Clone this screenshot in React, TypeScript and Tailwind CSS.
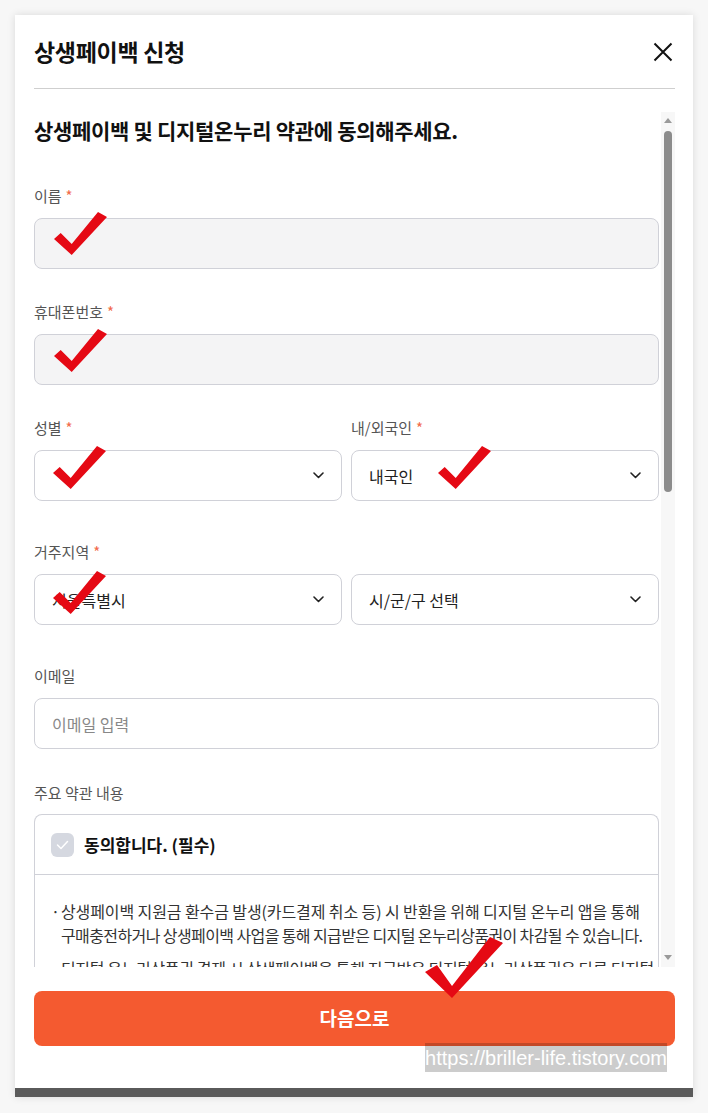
import React from "react";

function Check({ className }: { className: string }) {
  return (
    <svg className={className} viewBox="0 0 54 44" preserveAspectRatio="none">
      <polygon points="0,27 6.7,21 17.7,32 44,0 53,5 17.7,43" fill="#e50914" />
    </svg>
  );
}

function Chevron() {
  return (
    <svg width="11" height="7" viewBox="0 0 11 7" fill="none">
      <polyline points="1,1 5.5,5.5 10,1" stroke="#222" strokeWidth="1.6" strokeLinecap="round" strokeLinejoin="round" />
    </svg>
  );
}

function Label({ text, required }: { text: string; required?: boolean }) {
  return (
    <div className="text-[15px] leading-[22px] text-[#555]">
      {text}
      {required && <span className="ml-[4px] text-[#f26a4b]">*</span>}
    </div>
  );
}

function Select({ value }: { value?: string }) {
  return (
    <div className="h-[51px] rounded-[8px] border border-[#d0d1d8] bg-white flex items-center justify-between pl-[17px] pr-[17px]">
      <span className="text-[16px] text-[#222]">{value}</span>
      <Chevron />
    </div>
  );
}

export default function App() {
  return (
    <div className="relative min-h-[1113px] bg-[#f7f7f7] pt-[15px] px-[15px] font-['Noto_Sans_CJK_KR','Noto_Sans',sans-serif]">
      <div className="h-[1082px] bg-white shadow-[0_0_8px_rgba(0,0,0,0.12)] flex flex-col">
        {/* Header */}
        <div className="pl-[19px] pr-[18px]">
          <div className="h-[74px] flex items-center justify-between border-b border-[#cfcfcf]">
            <h1 className="text-[23px] font-bold text-[#111] tracking-[-0.3px]">상생페이백 신청</h1>
            <svg className="mr-[2px]" width="20" height="20" viewBox="0 0 20 20">
              <path d="M1.5 1.5L18.5 18.5M18.5 1.5L1.5 18.5" stroke="#111" strokeWidth="2" />
            </svg>
          </div>
        </div>

        {/* Scroll body */}
        <div className="mt-[23px] h-[855px] flex gap-[2px] pl-[19px] pr-[18px]">
          <div className="flex-1 overflow-hidden">
            <div className="pt-[4px] text-[21px] leading-[28px] font-bold text-[#111] tracking-[-0.3px]">
              상생페이백 및 디지털온누리 약관에 동의해주세요.
            </div>

            <div className="mt-[41px]">
              <Label text="이름" required />
              <div className="mt-[11px] h-[51px] rounded-[8px] border border-[#d0d1d8] bg-[#f4f4f5]" />
            </div>

            <div className="mt-[32px]">
              <Label text="휴대폰번호" required />
              <div className="mt-[11px] h-[51px] rounded-[8px] border border-[#d0d1d8] bg-[#f4f4f5]" />
            </div>

            <div className="mt-[32px] grid grid-cols-2 gap-[9px]">
              <div>
                <Label text="성별" required />
                <div className="mt-[11px]">
                  <Select value="" />
                </div>
              </div>
              <div>
                <Label text="내/외국인" required />
                <div className="mt-[11px]">
                  <Select value="내국인" />
                </div>
              </div>
            </div>

            <div className="mt-[40px]">
              <Label text="거주지역" required />
              <div className="mt-[11px] grid grid-cols-2 gap-[9px]">
                <Select value="서울특별시" />
                <Select value="시/군/구 선택" />
              </div>
            </div>

            <div className="mt-[40px]">
              <Label text="이메일" />
              <div className="mt-[11px] h-[51px] rounded-[8px] border border-[#d0d1d8] bg-white flex items-center pl-[17px]">
                <span className="text-[16px] text-[#888]">이메일 입력</span>
              </div>
            </div>

            <div className="mt-[33px]">
              <Label text="주요 약관 내용" />
              <div className="mt-[10px] rounded-t-[8px] border border-[#d0d1d8] border-b-0">
                <div className="h-[60px] flex items-center gap-[10px] pl-[16px] border-b border-[#d0d1d8]">
                  <div className="w-[23px] h-[24px] rounded-[6px] bg-[#d5d8e0] flex items-center justify-center">
                    <svg width="13" height="10" viewBox="0 0 13 10" fill="none">
                      <polyline points="1.5,5 5,8.5 11.5,1.5" stroke="#fff" strokeWidth="1.5" strokeLinecap="round" strokeLinejoin="round" />
                    </svg>
                  </div>
                  <span className="text-[17px] font-bold text-[#111]">동의합니다. (필수)</span>
                </div>
                <div className="pt-[24px] pl-[16px] text-[16px] leading-[24px] text-[#333] whitespace-nowrap">
                  <div className="flex">
                    <span className="w-[10px]">·</span>
                    <div>
                      <div className="tracking-[-0.1px]">상생페이백 지원금 환수금 발생(카드결제 취소 등) 시 반환을 위해 디지털 온누리 앱을 통해</div>
                      <div className="tracking-[-0.6px]">구매충전하거나 상생페이백 사업을 통해 지급받은 디지털 온누리상품권이 차감될 수 있습니다.</div>
                    </div>
                  </div>
                  <div className="flex mt-[9px]">
                    <span className="w-[10px]" />
                    <div className="tracking-[-0.35px]">디지털 온누리상품권 결제 시 상생페이백을 통해 지급받은 디지털 온누리상품권은 다른 디지털</div>
                  </div>
                </div>
              </div>
            </div>
          </div>

          {/* Scrollbar */}
          <div className="w-[14px] bg-[#f7f7f7] flex flex-col items-center pt-[6px] pb-[7px]">
            <svg width="8" height="5" viewBox="0 0 8 5">
              <polygon points="0,5 4,0 8,5" fill="#9a9a9a" />
            </svg>
            <div className="mt-[8px] w-[8px] h-[361px] rounded-full bg-[#8c8c8c]" />
            <div className="flex-1" />
            <svg width="8" height="5" viewBox="0 0 8 5">
              <polygon points="0,0 8,0 4,5" fill="#9a9a9a" />
            </svg>
          </div>
        </div>

        {/* Button */}
        <div className="mt-[24px] pl-[19px] pr-[18px]">
          <button className="w-full h-[55px] rounded-[8px] bg-[#f45a30] text-white text-[19px] font-bold">
            다음으로
          </button>
        </div>

        <div className="flex-1" />
        <div className="h-[9px] bg-[#5a5a5a]" />
      </div>

      {/* Annotation marks */}
      <Check className="absolute left-[54px] top-[212px] w-[54px] h-[44px]" />
      <Check className="absolute left-[54px] top-[329px] w-[54px] h-[44px]" />
      <Check className="absolute left-[53px] top-[446px] w-[54px] h-[44px]" />
      <Check className="absolute left-[438px] top-[446px] w-[54px] h-[44px]" />
      <Check className="absolute left-[53px] top-[571px] w-[54px] h-[44px]" />
      <svg className="absolute left-[424px] top-[936px] w-[80px] h-[63px]" viewBox="0 0 80 63">
        <polygon points="1,36 13,29 28,50 66,1 79,7 28,62" fill="#e50914" />
      </svg>

      {/* Watermark */}
      <div className="absolute left-[425px] top-[1043px] w-[242px] h-[29px] bg-[rgba(0,0,0,0.2)] flex items-center justify-center">
        <span className="text-[20px] text-white font-['Liberation_Sans',sans-serif] leading-none">https://briller-life.tistory.com</span>
      </div>
    </div>
  );
}
